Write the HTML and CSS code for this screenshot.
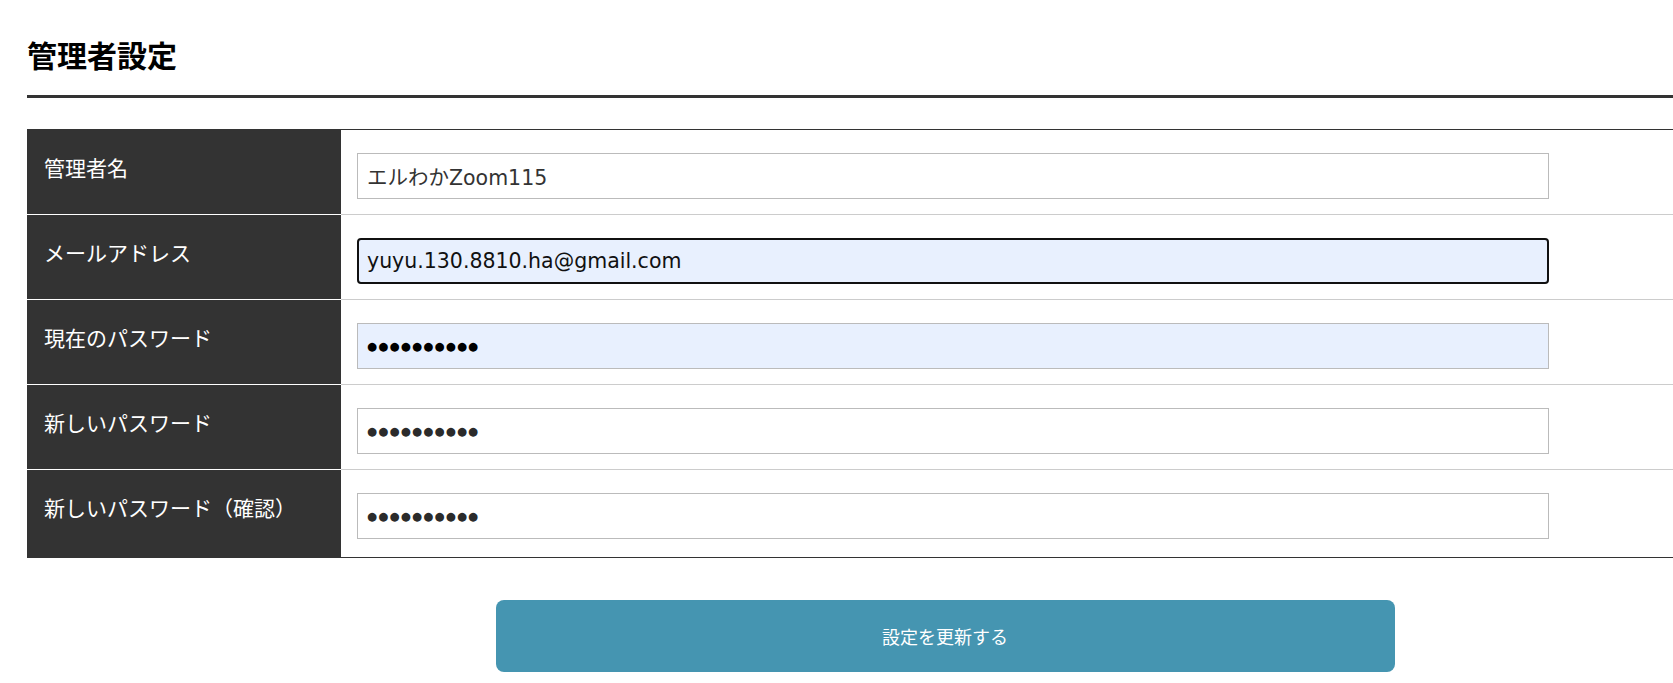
FILE: index.html
```html
<!DOCTYPE html>
<html lang="ja">
<head>
<meta charset="utf-8">
<title>管理者設定</title>
<link rel="stylesheet" href="styles.css">
</head>
<body>
<div class="page">
  <h1 class="title">管理者設定</h1>
  <div class="form">
    <div class="row">
      <div class="label">管理者名</div>
      <div class="field"><input class="input" type="text" value="エルわかZoom115" readonly></div>
    </div>
    <div class="row">
      <div class="label">メールアドレス</div>
      <div class="field"><input class="input input-focus" type="text" value="yuyu.130.8810.ha@gmail.com" readonly></div>
    </div>
    <div class="row">
      <div class="label">現在のパスワード</div>
      <div class="field"><input class="input input-autofill dots dots-black" type="text" value="●●●●●●●●●●" readonly></div>
    </div>
    <div class="row">
      <div class="label">新しいパスワード</div>
      <div class="field"><input class="input dots" type="text" value="●●●●●●●●●●" readonly></div>
    </div>
    <div class="row row-last">
      <div class="label">新しいパスワード（確認）</div>
      <div class="field"><input class="input dots" type="text" value="●●●●●●●●●●" readonly></div>
    </div>
  </div>
  <div class="actions">
    <button class="submit" type="button">設定を更新する</button>
  </div>
</div>
</body>
</html>
```
FILE: styles.css
```css
html, body {
  margin: 0;
  padding: 0;
  background: #fff;
  overflow: hidden;
}

.page {
  width: 1836px;
  margin-left: 27px;
  font-family: "Noto Sans CJK JP", "Noto Sans", sans-serif;
  color: #333;
}

.title {
  margin: 0;
  padding: 36px 0 23px;
  font-size: 30px;
  line-height: 36px;
  font-weight: 700;
  color: #000;
  border-bottom: 3px solid #333;
}

.form {
  margin-top: 31px;
  border-top: 1px solid #333;
}

.row {
  display: grid;
  grid-template-columns: 314px 1fr;
}

.label {
  background: #333;
  color: #fff;
  font-size: 21px;
  line-height: 30px;
  padding: 22px 0 0 17px;
  border-bottom: 1px solid #fff;
}

.field {
  box-sizing: border-box;
  height: 85px;
  padding: 23px 0 0 16px;
  border-bottom: 1px solid #ccc;
}

.row-last .label {
  border-bottom: 1px solid #333;
}

.row-last .field {
  height: 88px;
  border-bottom: 1px solid #333;
}

.input {
  display: block;
  width: 1192px;
  height: 46px;
  box-sizing: border-box;
  border: 1px solid #bbb;
  border-radius: 0;
  background: #fff;
  padding: 0 9px;
  font-family: "DejaVu Sans", "Noto Sans CJK JP", sans-serif;
  font-size: 20.5px;
  color: #333;
  outline: none;
  margin: 0;
}

.input-focus {
  border: 2px solid #111;
  border-radius: 4px;
  padding: 0 8px;
  background: #e8f0fe;
  color: #111;
}

.input-autofill {
  background: #e8f0fe;
}

.dots {
  font-family: "DejaVu Sans", sans-serif;
  font-size: 11.5px;
  letter-spacing: 1.2px;
  color: #2b2b2b;
}

.dots-black {
  color: #000;
}

.actions {
  margin-top: 42px;
  display: flex;
  justify-content: center;
}

.submit {
  width: 899px;
  height: 72px;
  border: none;
  border-radius: 8px;
  background: #4595b1;
  color: #fff;
  font-family: "Noto Sans CJK JP", "Noto Sans", sans-serif;
  font-size: 18px;
  cursor: pointer;
}
```
